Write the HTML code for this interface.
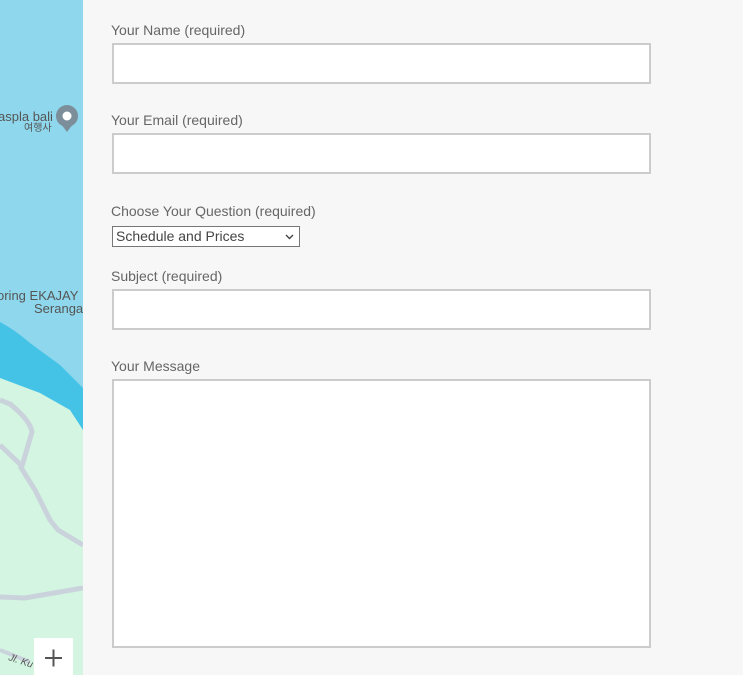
<!DOCTYPE html>
<html><head><style>
body{margin:0;width:743px;height:675px;overflow:hidden;background:#f7f7f7;font-family:"Liberation Sans",sans-serif;position:relative}
.map{position:absolute;left:0;top:0;width:83px;height:675px}
.l{position:absolute;left:111px;font-size:14px;color:#666}
.i{position:absolute;left:112px;width:535px;height:37px;border:2px solid #ccc;background:#fff}
</style></head><body>
<svg class="map" width="83" height="675" viewBox="0 0 83 675">
<rect width="83" height="675" fill="#8fd7ec"/>
<path d="M0 322 Q15 330 30 343 L60 365 L83 388 L83 675 L0 675Z" fill="#45c3e7"/>
<path d="M0 378 L40 393 L70 410 L83 430 L83 675 L0 675Z" fill="#d3f5e1"/>
<path d="M0 400 L10 404 Q30 420 32 432 L22 466 L0 445" fill="none" stroke="#cad3dc" stroke-width="5"/>
<path d="M20 466 L35 490 L50 520 L58 530 L83 545" fill="none" stroke="#cad3dc" stroke-width="5"/>
<path d="M0 597 L25 598 L83 588" fill="none" stroke="#cad3dc" stroke-width="5"/>
<path d="M0 650 L30 662" fill="none" stroke="#cad3dc" stroke-width="4"/>
<text x="-2" y="121" font-size="13" fill="#555" font-family="Liberation Sans">aspla bali</text>
<text x="24" y="131" font-size="10" fill="#555" font-family="Noto Sans CJK KR,sans-serif">여행사</text>
<circle cx="67" cy="116" r="11" fill="#7b8e9a"/><circle cx="67" cy="116" r="4.5" fill="#fff"/>
<path d="M61 124 L67 132 L73 124Z" fill="#7b8e9a"/>
<text x="-3" y="300" font-size="13" fill="#555" font-family="Liberation Sans">oring EKAJAY</text>
<text x="34" y="313" font-size="13" fill="#555" font-family="Liberation Sans">Seranga</text>
<text x="8" y="660" font-size="10" fill="#555" font-style="italic" transform="rotate(18 8 660)">Jl. Ku</text>
<rect x="34" y="638" width="39" height="40" fill="#fff"/>
<path d="M45 658 H62 M53.5 649.5 V666.5" stroke="#555" stroke-width="2"/>
</svg>
<div class="l" style="top:22px">Your Name (required)</div>
<div class="i" style="top:43px"></div>
<div class="l" style="top:112px">Your Email (required)</div>
<div class="i" style="top:133px"></div>
<div class="l" style="top:203px">Choose Your Question (required)</div>
<div style="position:absolute;left:112px;top:226px;height:19px;border:1px solid #777;background:#fff;font-size:14px;color:#444;line-height:19px;padding-left:3px;width:183px">Schedule and Prices<svg style="position:absolute;right:5px;top:7px" width="9" height="6"><path d="M1 1L4.5 4.5L8 1" fill="none" stroke="#444" stroke-width="1.4"/></svg></div>
<div class="l" style="top:268px">Subject (required)</div>
<div class="i" style="top:289px"></div>
<div class="l" style="top:358px">Your Message</div>
<div class="i" style="top:379px;height:265px"></div>
</body></html>
